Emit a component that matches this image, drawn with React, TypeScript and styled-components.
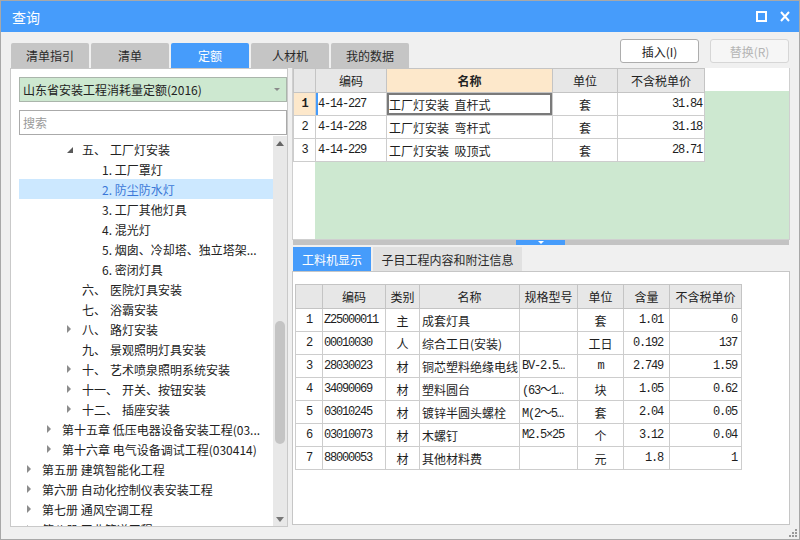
import React from 'react'
import styled, { createGlobalStyle, css } from 'styled-components'

const BLUE = '#469cfb'
const CJK = `"Noto Sans CJK SC", "Microsoft YaHei", sans-serif`
const MONO = `"Liberation Mono", "Noto Sans CJK SC", monospace`

const GlobalStyle = createGlobalStyle`
  html, body { margin: 0; padding: 0; }
  body { font-family: ${CJK}; font-size: 12px; color: #222; background: #fff; }
  * { box-sizing: border-box; }
`

type TreeItem = {
  level: number
  arrow?: 'open' | 'closed'
  label?: string
  text: string
  selected?: boolean
}

const tree: TreeItem[] = [
  { level: 2, arrow: 'open', label: '五、', text: '工厂灯安装' },
  { level: 3, text: '1. 工厂罩灯' },
  { level: 3, text: '2. 防尘防水灯', selected: true },
  { level: 3, text: '3. 工厂其他灯具' },
  { level: 3, text: '4. 混光灯' },
  { level: 3, text: '5. 烟囱、冷却塔、独立塔架...' },
  { level: 3, text: '6. 密闭灯具' },
  { level: 2, label: '六、', text: '医院灯具安装' },
  { level: 2, label: '七、', text: '浴霸安装' },
  { level: 2, arrow: 'closed', label: '八、', text: '路灯安装' },
  { level: 2, label: '九、', text: '景观照明灯具安装' },
  { level: 2, arrow: 'closed', label: '十、', text: '艺术喷泉照明系统安装' },
  { level: 2, arrow: 'closed', label: '十一、', text: '开关、按钮安装' },
  { level: 2, arrow: 'closed', label: '十二、', text: '插座安装' },
  { level: 1, arrow: 'closed', text: '第十五章 低压电器设备安装工程(03...' },
  { level: 1, arrow: 'closed', text: '第十六章 电气设备调试工程(030414)' },
  { level: 0, arrow: 'closed', text: '第五册 建筑智能化工程' },
  { level: 0, arrow: 'closed', text: '第六册 自动化控制仪表安装工程' },
  { level: 0, arrow: 'closed', text: '第七册 通风空调工程' },
  { level: 0, arrow: 'closed', text: '第八册 工业管道工程' },
]

const quotaRows = [
  { code: '4-14-227', name: '工厂灯安装  直杆式', unit: '套', price: '31.84' },
  { code: '4-14-228', name: '工厂灯安装  弯杆式', unit: '套', price: '31.18' },
  { code: '4-14-229', name: '工厂灯安装  吸顶式', unit: '套', price: '28.71' },
]

const materials = [
  { code: 'Z25000011', kind: '主', name: '成套灯具', spec: '', unit: '套', qty: '1.01', price: '0' },
  { code: '00010030', kind: '人', name: '综合工日(安装)', spec: '', unit: '工日', qty: '0.192', price: '137' },
  { code: '28030023', kind: '材', name: '铜芯塑料绝缘电线', spec: 'BV-2.5…', unit: 'm', qty: '2.749', price: '1.59' },
  { code: '34090069', kind: '材', name: '塑料圆台', spec: '(63～1…', unit: '块', qty: '1.05', price: '0.62' },
  { code: '03010245', kind: '材', name: '镀锌半圆头螺栓', spec: 'M(2～5…', unit: '套', qty: '2.04', price: '0.05' },
  { code: '03010073', kind: '材', name: '木螺钉', spec: 'M2.5×25', unit: '个', qty: '3.12', price: '0.04' },
  { code: '88000053', kind: '材', name: '其他材料费', spec: '', unit: '元', qty: '1.8', price: '1' },
]

const Window = styled.div`
  position: relative;
  width: 800px;
  height: 540px;
  border: 1px solid #a8a8a8;
  background: #f0f0f0;
  display: flex;
  flex-direction: column;
  overflow: hidden;
`

const TitleBar = styled.div`
  flex: none;
  height: 31px;
  background: ${BLUE};
  color: #fff;
  display: flex;
  align-items: center;
  padding: 0 9px 0 11px;
`

const Title = styled.div`
  flex: 1;
  font-size: 14px;
`

const TitleIcons = styled.div`
  display: flex;
  align-items: center;
  gap: 13px;
`

const Body = styled.div`
  flex: 1;
  display: flex;
  flex-direction: column;
  padding: 0 9px;
`

const Toolbar = styled.div`
  height: 36px;
  display: flex;
  justify-content: space-between;
  align-items: flex-end;
`

const TabStrip = styled.div`
  display: flex;
  gap: 2px;
  margin-left: 1px;
`

const Tab = styled.div<{ $active?: boolean }>`
  width: 78px;
  height: 25px;
  border-radius: 2px 2px 0 0;
  display: flex;
  align-items: center;
  justify-content: center;
  font-size: 12px;
  background: ${p => (p.$active ? BLUE : '#c5c5c5')};
  color: ${p => (p.$active ? '#fff' : '#2a2a2a')};
`

const ButtonGroup = styled.div`
  align-self: flex-start;
  margin-top: 7px;
  margin-right: 1px;
  display: flex;
  gap: 11px;
`

const Button = styled.div<{ $disabled?: boolean }>`
  width: 79px;
  height: 24px;
  border-radius: 3px;
  display: flex;
  align-items: center;
  justify-content: center;
  font-size: 12px;
  background: ${p => (p.$disabled ? '#f6f6f6' : '#fff')};
  border: 1px solid ${p => (p.$disabled ? '#d6d6d6' : '#adadad')};
  color: ${p => (p.$disabled ? '#b4b4b4' : '#222')};
`

const Main = styled.div`
  display: flex;
  gap: 4px;
  height: 459px;
`

const LeftPanel = styled.div`
  width: 278px;
  height: 459px;
  background: #fff;
  border: 1px solid #c9c9c9;
  display: flex;
  flex-direction: column;
  padding: 8px 0 0 8px;
`

const Select = styled.div`
  height: 25px;
  background: #cde8d0;
  border: 1px solid #aab5ab;
  display: flex;
  align-items: center;
  justify-content: space-between;
  padding: 0 6px 0 3px;
  font-size: 12px;
  color: #222;
`

const SelectArrow = styled.span`
  width: 0;
  height: 0;
  border-style: solid;
  border-width: 3px 3px 0 3px;
  border-color: #8a8a8a transparent transparent transparent;
`

const SearchBox = styled.input`
  margin-top: 8px;
  height: 25px;
  border: 1px solid #aaa;
  padding: 0 3px;
  font-family: ${CJK};
  font-size: 12px;
  outline: none;
  &::placeholder { color: #9a9a9a; }
`

const TreeWrap = styled.div`
  flex: 1;
  display: flex;
  margin-top: 1px;
  overflow: hidden;
`

const TreeList = styled.div`
  flex: 1;
  padding-top: 3px;
  overflow: hidden;
`

const TreeRow = styled.div<{ $level: number; $selected?: boolean }>`
  height: 20px;
  display: flex;
  align-items: center;
  white-space: nowrap;
  padding-left: ${p => 8 + p.$level * 20}px;
  font-size: 12px;
  color: ${p => (p.$selected ? '#3b78d8' : '#222')};
  background: ${p => (p.$selected ? '#cce8ff' : 'transparent')};
`

const ArrowSlot = styled.span`
  flex: none;
  width: 15px;
  display: flex;
  align-items: center;
`

const Arrow = styled.span<{ $kind: 'open' | 'closed' }>`
  width: 0;
  height: 0;
  border-style: solid;
  ${p =>
    p.$kind === 'open'
      ? css`
          border-width: 0 0 6px 6px;
          border-color: transparent transparent #5a5a5a transparent;
          margin-top: 1px;
        `
      : css`
          border-width: 4px 0 4px 4px;
          border-color: transparent transparent transparent #8c8c8c;
        `}
`

const NodeLabel = styled.span`
  margin-right: 4px;
`

const ScrollTrack = styled.div`
  flex: none;
  width: 14px;
  background: #e8e8e8;
  display: flex;
  flex-direction: column;
  align-items: center;
`

const ScrollUp = styled.span`
  margin-top: 5px;
  width: 0;
  height: 0;
  border-style: solid;
  border-width: 0 4.5px 5px 4.5px;
  border-color: transparent transparent #666 transparent;
`

const ScrollThumb = styled.div`
  margin-top: 175px;
  width: 10px;
  height: 123px;
  border-radius: 5px;
  background: #c4c4c4;
`

const ScrollDown = styled.span`
  margin-top: auto;
  margin-bottom: 4px;
  width: 0;
  height: 0;
  border-style: solid;
  border-width: 5px 4.5px 0 4.5px;
  border-color: #777 transparent transparent transparent;
`

const RightColumn = styled.div`
  width: 498px;
  display: flex;
  flex-direction: column;
`

const GridBox = styled.div`
  height: 172px;
  border: 1px solid #cfcfcf;
  border-top: none;
  background:
    linear-gradient(#fff, #fff) top left / 100% 23px no-repeat,
    linear-gradient(#fff, #fff) top left / 22px 100% no-repeat,
    #cde8d0;
  overflow: hidden;
`

const GridTable = styled.table<{ $width: number }>`
  border-collapse: collapse;
  table-layout: fixed;
  width: ${p => p.$width}px;
  font-size: 12px;
`

const Th = styled.th<{ $hot?: boolean }>`
  height: 24px;
  padding: 0;
  border: 1px solid #c4c4c4;
  text-align: center;
  font-weight: ${p => (p.$hot ? 'bold' : 'normal')};
  background: ${p => (p.$hot ? '#fde8cb' : '#e7e7e7')};
  color: #222;
`

const Td = styled.td<{
  $align?: 'left' | 'center' | 'right'
  $mono?: boolean
  $pad?: number
  $current?: boolean
  $focus?: boolean
  $marker?: boolean
}>`
  height: 23px;
  padding: 0 ${p => p.$pad ?? 2}px;
  border: 1px solid #cdcdcd;
  background: #fff;
  white-space: pre;
  overflow: hidden;
  text-align: ${p => p.$align ?? 'left'};
  color: #1e1e1e;
  ${p =>
    p.$mono &&
    css`
      font-family: ${MONO};
      font-size: 12px;
      letter-spacing: -1.2px;
    `}
  ${p =>
    p.$current &&
    css`
      background: #fde8cb;
      font-weight: bold;
    `}
  ${p => p.$marker && css`box-shadow: inset 2px 0 0 ${BLUE};`}
  ${p => p.$focus && css`box-shadow: inset 0 0 0 2px #7a7a7a;`}
`

const Splitter = styled.div`
  height: 5px;
  margin: 0 1px;
  background: #c3c3c3;
  display: flex;
`

const SplitHandle = styled.div`
  margin-left: 223px;
  width: 49px;
  height: 5px;
  background: ${BLUE};
  display: flex;
  justify-content: center;
  align-items: flex-start;
  padding-top: 1px;
  &::after {
    content: '';
    border-style: solid;
    border-width: 3px 3.5px 0 3.5px;
    border-color: #fff transparent transparent transparent;
  }
`

const SubTabs = styled.div`
  margin-top: 2px;
  margin-left: 1px;
  height: 24px;
  display: flex;
  gap: 2px;
`

const SubTab = styled.div<{ $active?: boolean; $width: number }>`
  width: ${p => p.$width}px;
  display: flex;
  align-items: center;
  justify-content: center;
  font-size: 12px;
  background: ${p => (p.$active ? BLUE : '#e1e1e1')};
  color: ${p => (p.$active ? '#fff' : '#2a2a2a')};
`

const DetailPanel = styled.div`
  height: 254px;
  background: #fff;
  border: 1px solid #c6c6c6;
  padding: 12px 0 0 2px;
`

const Grip = styled.svg`
  position: absolute;
  right: 2px;
  bottom: 2px;
`

const App = () => {
  return (
    <>
      <GlobalStyle />
      <Window>
        <TitleBar>
          <Title>查询</Title>
          <TitleIcons>
            <svg width="11" height="11" viewBox="0 0 11 11">
              <rect x="1" y="1" width="9" height="9" fill="none" stroke="#fff" strokeWidth="2" />
            </svg>
            <svg width="10" height="11" viewBox="0 0 10 11">
              <path d="M1 1 L9 10 M9 1 L1 10" stroke="#fff" strokeWidth="2" fill="none" />
            </svg>
          </TitleIcons>
        </TitleBar>
        <Body>
          <Toolbar>
            <TabStrip>
              <Tab>清单指引</Tab>
              <Tab>清单</Tab>
              <Tab $active>定额</Tab>
              <Tab>人材机</Tab>
              <Tab>我的数据</Tab>
            </TabStrip>
            <ButtonGroup>
              <Button>插入(I)</Button>
              <Button $disabled>替换(R)</Button>
            </ButtonGroup>
          </Toolbar>
          <Main>
            <LeftPanel>
              <Select>
                <span>山东省安装工程消耗量定额(2016)</span>
                <SelectArrow />
              </Select>
              <SearchBox placeholder="搜索" />
              <TreeWrap>
                <TreeList>
                  {tree.map((item, i) => (
                    <TreeRow key={i} $level={item.level} $selected={item.selected}>
                      <ArrowSlot>{item.arrow && <Arrow $kind={item.arrow} />}</ArrowSlot>
                      {item.label && <NodeLabel>{item.label}</NodeLabel>}
                      <span>{item.text}</span>
                    </TreeRow>
                  ))}
                </TreeList>
                <ScrollTrack>
                  <ScrollUp />
                  <ScrollThumb />
                  <ScrollDown />
                </ScrollTrack>
              </TreeWrap>
            </LeftPanel>
            <RightColumn>
              <GridBox>
                <GridTable $width={411}>
                  <colgroup>
                    <col style={{ width: 22 }} />
                    <col style={{ width: 71 }} />
                    <col style={{ width: 166 }} />
                    <col style={{ width: 65 }} />
                    <col style={{ width: 87 }} />
                  </colgroup>
                  <thead>
                    <tr>
                      <Th />
                      <Th>编码</Th>
                      <Th $hot>名称</Th>
                      <Th>单位</Th>
                      <Th>不含税单价</Th>
                    </tr>
                  </thead>
                  <tbody>
                    {quotaRows.map((r, i) => (
                      <tr key={r.code}>
                        <Td $align="center" $mono $current={i === 0}>{i + 1}</Td>
                        <Td $mono $marker={i === 0}>{r.code}</Td>
                        <Td $focus={i === 0}>{r.name}</Td>
                        <Td $align="center">{r.unit}</Td>
                        <Td $align="right" $mono>{r.price}</Td>
                      </tr>
                    ))}
                  </tbody>
                </GridTable>
              </GridBox>
              <Splitter>
                <SplitHandle />
              </Splitter>
              <SubTabs>
                <SubTab $active $width={78}>工料机显示</SubTab>
                <SubTab $width={149}>子目工程内容和附注信息</SubTab>
              </SubTabs>
              <DetailPanel>
                <GridTable $width={446}>
                  <colgroup>
                    <col style={{ width: 27 }} />
                    <col style={{ width: 63 }} />
                    <col style={{ width: 34 }} />
                    <col style={{ width: 100 }} />
                    <col style={{ width: 58 }} />
                    <col style={{ width: 46 }} />
                    <col style={{ width: 46 }} />
                    <col style={{ width: 72 }} />
                  </colgroup>
                  <thead>
                    <tr>
                      <Th />
                      <Th>编码</Th>
                      <Th>类别</Th>
                      <Th>名称</Th>
                      <Th>规格型号</Th>
                      <Th>单位</Th>
                      <Th>含量</Th>
                      <Th>不含税单价</Th>
                    </tr>
                  </thead>
                  <tbody>
                    {materials.map((m, i) => (
                      <tr key={m.code}>
                        <Td $align="center" $mono>{i + 1}</Td>
                        <Td $mono $pad={1}>{m.code}</Td>
                        <Td $align="center">{m.kind}</Td>
                        <Td>{m.name}</Td>
                        <Td $mono>{m.spec}</Td>
                        <Td $align="center" $mono={m.unit === 'm'}>{m.unit}</Td>
                        <Td $align="right" $mono $pad={6}>{m.qty}</Td>
                        <Td $align="right" $mono $pad={4}>{m.price}</Td>
                      </tr>
                    ))}
                  </tbody>
                </GridTable>
              </DetailPanel>
            </RightColumn>
          </Main>
        </Body>
        <Grip width="8" height="8" viewBox="0 0 8 8">
          <rect x="6" y="0" width="2" height="2" fill="#9a9a9a" />
          <rect x="3" y="3" width="2" height="2" fill="#9a9a9a" />
          <rect x="6" y="3" width="2" height="2" fill="#9a9a9a" />
          <rect x="0" y="6" width="2" height="2" fill="#9a9a9a" />
          <rect x="3" y="6" width="2" height="2" fill="#9a9a9a" />
          <rect x="6" y="6" width="2" height="2" fill="#9a9a9a" />
        </Grip>
      </Window>
    </>
  )
}

export default App
